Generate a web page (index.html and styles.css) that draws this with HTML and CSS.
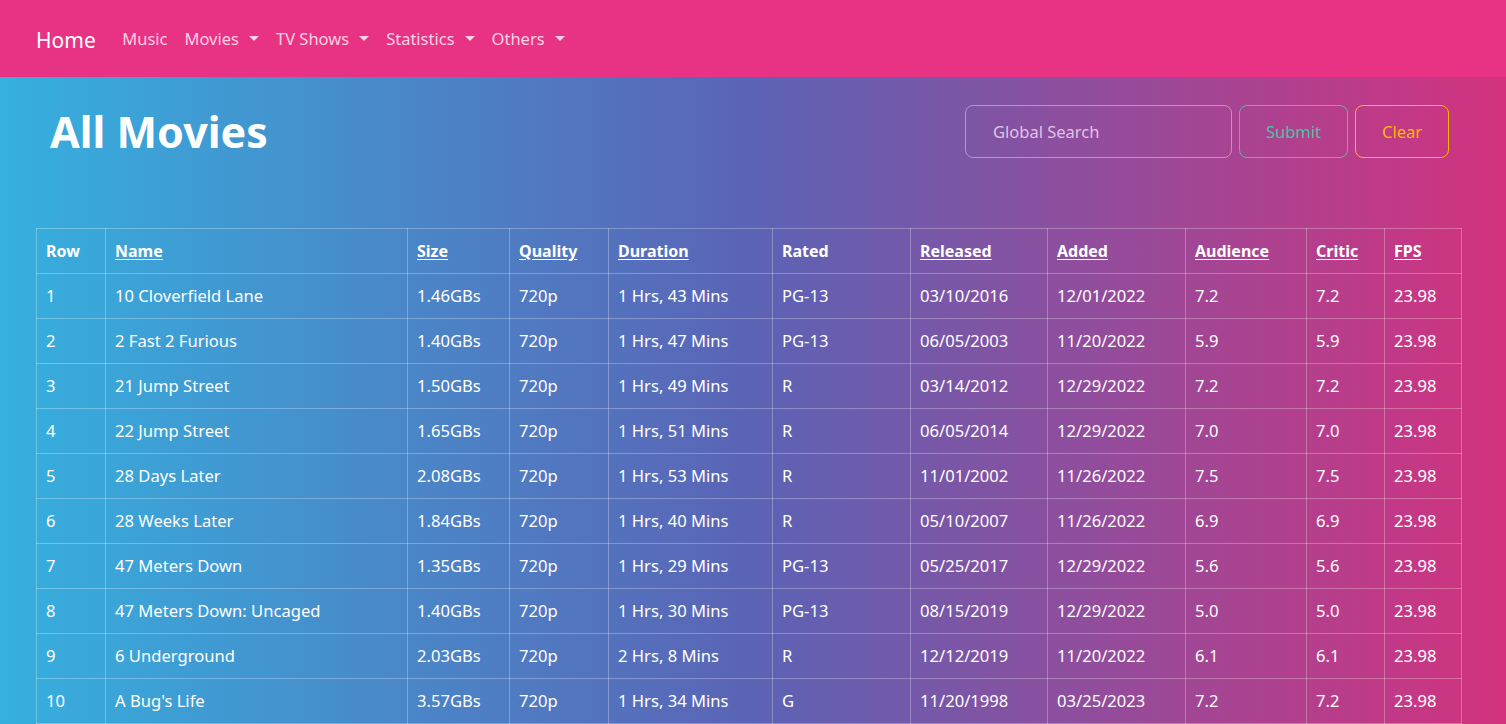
FILE: index.html
```html
<!DOCTYPE html>
<html lang="en">
<head>
<meta charset="utf-8">
<title>All Movies</title>
<link rel="stylesheet" href="styles.css">
</head>
<body>
<nav class="navbar">
  <a class="brand" href="#">Home</a>
  <ul class="nav-links">
    <li><a href="#">Music</a></li>
    <li><a href="#" class="dropdown">Movies</a></li>
    <li><a href="#" class="dropdown">TV Shows</a></li>
    <li><a href="#" class="dropdown">Statistics</a></li>
    <li><a href="#" class="dropdown">Others</a></li>
  </ul>
</nav>
<main class="page">
  <header class="page-head">
    <h1 class="title">All Movies</h1>
    <form class="search">
      <input class="search-input" type="text" placeholder="Global Search">
      <button type="button" class="btn btn-submit">Submit</button>
      <button type="button" class="btn btn-clear">Clear</button>
    </form>
  </header>
  <table class="movies">
    <colgroup>
      <col style="width:69px"><col style="width:302px"><col style="width:102px"><col style="width:99px"><col style="width:164px"><col style="width:138px"><col style="width:137px"><col style="width:138px"><col style="width:121px"><col style="width:78px"><col style="width:77px">
    </colgroup>
    <thead>
      <tr>
        <th>Row</th><th><u>Name</u></th><th><u>Size</u></th><th><u>Quality</u></th><th><u>Duration</u></th><th>Rated</th><th><u>Released</u></th><th><u>Added</u></th><th><u>Audience</u></th><th><u>Critic</u></th><th><u>FPS</u></th>
      </tr>
    </thead>
    <tbody>
      <tr><td>1</td><td>10 Cloverfield Lane</td><td>1.46GBs</td><td>720p</td><td>1 Hrs, 43 Mins</td><td>PG-13</td><td>03/10/2016</td><td>12/01/2022</td><td>7.2</td><td>7.2</td><td>23.98</td></tr>
      <tr><td>2</td><td>2 Fast 2 Furious</td><td>1.40GBs</td><td>720p</td><td>1 Hrs, 47 Mins</td><td>PG-13</td><td>06/05/2003</td><td>11/20/2022</td><td>5.9</td><td>5.9</td><td>23.98</td></tr>
      <tr><td>3</td><td>21 Jump Street</td><td>1.50GBs</td><td>720p</td><td>1 Hrs, 49 Mins</td><td>R</td><td>03/14/2012</td><td>12/29/2022</td><td>7.2</td><td>7.2</td><td>23.98</td></tr>
      <tr><td>4</td><td>22 Jump Street</td><td>1.65GBs</td><td>720p</td><td>1 Hrs, 51 Mins</td><td>R</td><td>06/05/2014</td><td>12/29/2022</td><td>7.0</td><td>7.0</td><td>23.98</td></tr>
      <tr><td>5</td><td>28 Days Later</td><td>2.08GBs</td><td>720p</td><td>1 Hrs, 53 Mins</td><td>R</td><td>11/01/2002</td><td>11/26/2022</td><td>7.5</td><td>7.5</td><td>23.98</td></tr>
      <tr><td>6</td><td>28 Weeks Later</td><td>1.84GBs</td><td>720p</td><td>1 Hrs, 40 Mins</td><td>R</td><td>05/10/2007</td><td>11/26/2022</td><td>6.9</td><td>6.9</td><td>23.98</td></tr>
      <tr><td>7</td><td>47 Meters Down</td><td>1.35GBs</td><td>720p</td><td>1 Hrs, 29 Mins</td><td>PG-13</td><td>05/25/2017</td><td>12/29/2022</td><td>5.6</td><td>5.6</td><td>23.98</td></tr>
      <tr><td>8</td><td>47 Meters Down: Uncaged</td><td>1.40GBs</td><td>720p</td><td>1 Hrs, 30 Mins</td><td>PG-13</td><td>08/15/2019</td><td>12/29/2022</td><td>5.0</td><td>5.0</td><td>23.98</td></tr>
      <tr><td>9</td><td>6 Underground</td><td>2.03GBs</td><td>720p</td><td>2 Hrs, 8 Mins</td><td>R</td><td>12/12/2019</td><td>11/20/2022</td><td>6.1</td><td>6.1</td><td>23.98</td></tr>
      <tr><td>10</td><td>A Bug's Life</td><td>3.57GBs</td><td>720p</td><td>1 Hrs, 34 Mins</td><td>G</td><td>11/20/1998</td><td>03/25/2023</td><td>7.2</td><td>7.2</td><td>23.98</td></tr>
    </tbody>
  </table>
</main>
</body>
</html>
```

FILE: styles.css
```css
* { box-sizing: border-box; }
html, body { margin: 0; padding: 0; }
body {
  font-family: "Noto Sans", "Lato", sans-serif;
  font-size: 16px;
  color: #fff;
  min-height: 724px;
  background: linear-gradient(90deg, #35b0de 0%, #5b63b5 50%, #d3327e 100%);
  overflow: hidden;
}
a { color: inherit; text-decoration: none; }

.navbar {
  height: 77px;
  background: #e83283;
  display: flex;
  align-items: center;
  padding: 0 36px;
}
.brand {
  font-size: 21px;
  color: #fff;
  margin-right: 18px;
  padding-top: 2px;
}
.nav-links {
  list-style: none;
  display: flex;
  margin: 0;
  padding: 0;
}
.nav-links a {
  display: inline-flex;
  align-items: center;
  font-size: 16.5px;
  color: rgba(255, 240, 248, 0.85);
  padding: 0 8.5px;
}
.dropdown::after {
  content: "";
  display: inline-block;
  margin-left: 10px;
  border-top: 5px solid currentColor;
  border-left: 5px solid transparent;
  border-right: 5px solid transparent;
}

.page { padding: 0 45px 0 36px; }
.page-head {
  display: flex;
  justify-content: space-between;
  align-items: flex-start;
  padding: 28px 12px 0 14px;
  height: 81px;
}
.title {
  margin: 0;
  margin-top: 3px;
  font-size: 43px;
  font-weight: 700;
  line-height: 48px;
}
.search {
  display: flex;
  gap: 7px;
}
.search-input {
  width: 267px;
  height: 53px;
  background: transparent;
  border: 1px solid rgba(255, 255, 255, 0.4);
  border-radius: 8px;
  padding: 0 27px;
  font: inherit;
  font-size: 16.5px;
  color: #fff;
  outline: none;
}
.search-input::placeholder { color: rgba(240, 220, 240, 0.85); }
.btn {
  height: 53px;
  background: transparent;
  border-radius: 8px;
  font: inherit;
  font-size: 16.5px;
  cursor: pointer;
}
.btn-submit { width: 109px; border: 1px solid #3dc9a2; color: #3dc9a2; }
.btn-clear { width: 94px; border: 1px solid #ffb800; color: #ffb800; }

.movies {
  margin-top: 70px;
  width: 1425px;
  border-collapse: collapse;
  table-layout: fixed;
}
.movies th, .movies td {
  border: 1px solid rgba(255, 255, 255, 0.28);
  padding: 10px 9px;
  line-height: 24px;
  text-align: left;
  white-space: nowrap;
  font-size: 16.6px;
}
.movies th { font-weight: 700; font-size: 16px; }
.movies u { text-underline-offset: 2px; }
```
